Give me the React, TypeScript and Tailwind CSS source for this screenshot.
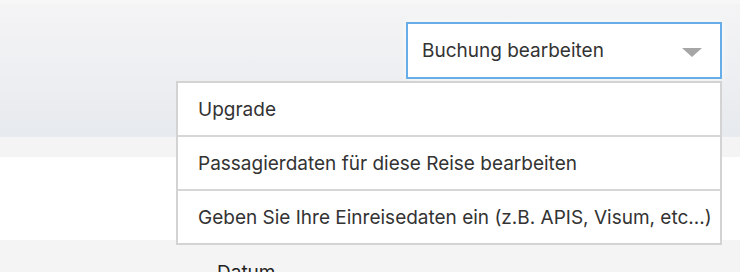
import React from "react";

export default function App() {
  const font = { fontFamily: "Inter, 'Liberation Sans', sans-serif" };
  return (
    <div className="w-[740px] h-[272px] overflow-hidden bg-[#f4f4f4] relative" style={font}>
      <div className="h-[4px] bg-[#f7f7f7]" />
      <div className="h-[133px] bg-gradient-to-b from-[#f4f4f5] to-[#e7eaee] flex justify-end pr-[18px] pt-[18px]">
        <div className="relative">
          <button className="w-[316px] h-[57px] bg-white border-2 border-[#67ade8] flex items-center justify-between pl-[14px] pr-[18px] pt-[2px] shadow-[0_0_8px_rgba(255,255,255,0.8)]">
            <span className="text-[19px] text-[#333333]">Buchung bearbeiten</span>
            <svg width="20" height="9" viewBox="0 0 20 9" className="mt-[1px]">
              <polygon points="0,0 20,0 10,9" fill="#a6a6a6" />
            </svg>
          </button>
          <div className="absolute right-0 top-[59px] w-[546px] bg-white border-2 border-[#d3d3d3] z-10">
            <div className="h-[54px] flex items-center pl-[20px] pt-[3px] text-[19px] text-[#333333] border-b-2 border-[#d6d6d6]">Upgrade</div>
            <div className="h-[54px] flex items-center pl-[20px] pt-[3px] text-[19px] text-[#333333] border-b-2 border-[#d6d6d6]">Passagierdaten für diese Reise bearbeiten</div>
            <div className="h-[52px] flex items-center pl-[20px] pt-[3px] text-[19px] text-[#333333]">Geben Sie Ihre Einreisedaten ein (z.B. APIS, Visum, etc...)</div>
          </div>
        </div>
      </div>
      <div className="h-[20px] bg-[#f4f4f4]" />
      <div className="h-[83px] bg-white" />
      <div className="pl-[217px] pt-[22px] text-[19px] leading-[22px] text-[#222222]">Datum</div>
    </div>
  );
}
